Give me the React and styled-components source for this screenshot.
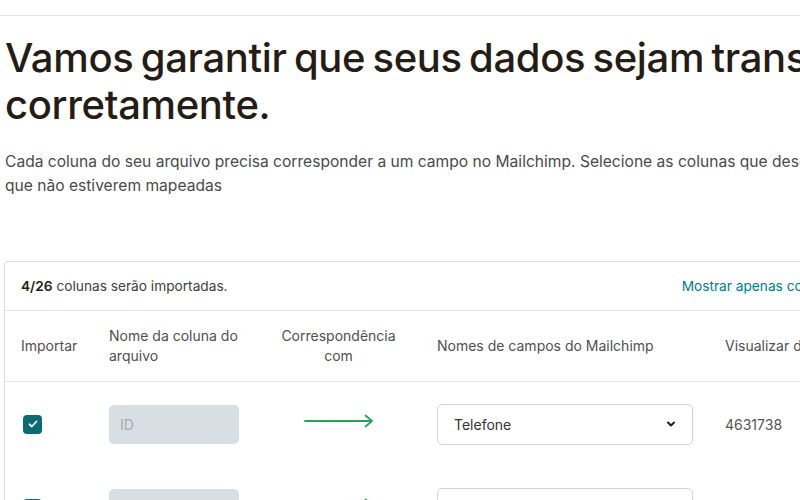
import React from 'react';
import styled, { createGlobalStyle } from 'styled-components';

const GlobalStyle = createGlobalStyle`
    html, body {
        margin: 0;
        padding: 0;
        background: #fff;
        overflow: hidden;
    }
    body {
        font-family: "Inter", "Liberation Sans", sans-serif;
        color: #241c15;
    }
`;

const TopBar = styled.div`
    height: 15px;
    border-bottom: 1px solid #e6e6e6;
`;

const Page = styled.main`
    width: 1200px;
    padding: 0 4px;
`;

const Heading = styled.h1`
    margin: 18px 0 0 1px;
    font-size: 40px;
    line-height: 47px;
    font-weight: 500;
    letter-spacing: -0.35px;
    word-spacing: -3px;
    color: #241c15;
    width: 1100px;
`;

const Intro = styled.p`
    margin: 22px 0 0 1px;
    font-size: 15.6px;
    line-height: 24px;
    color: #4a4a4a;
`;

const Card = styled.section`
    margin-top: 63px;
    border: 1px solid #dcdcdc;
    border-radius: 4px;
    width: 1100px;
`;

const CardHeader = styled.div`
    height: 48px;
    display: flex;
    align-items: center;
    justify-content: space-between;
    padding: 0 16px;
    border-bottom: 1px solid #e3e3e3;
    font-size: 13.7px;
    color: #3d3d3d;
    b {
        font-weight: 600;
        color: #241c15;
    }
`;

const CardLink = styled.a`
    color: #007c89;
    font-size: 13.7px;
    margin-right: 110px;
    text-decoration: none;
`;

const Row = styled.div`
    display: grid;
    grid-template-columns: 88px 163px 165px 288px 1fr;
    align-items: center;
    min-height: ${p => (p.$head ? '70px' : '84px')};
    border-bottom: ${p => (p.$head ? '1px solid #e3e3e3' : 'none')};
`;

const Cell = styled.div`
    padding: 0 16px;
    display: flex;
    align-items: center;
    justify-content: ${p => (p.$center ? 'center' : 'flex-start')};
`;

const HeadText = styled.div`
    font-size: 14px;
    line-height: 20px;
    color: #4f4f4f;
    text-align: ${p => (p.$center ? 'center' : 'left')};
`;

const Check = styled.span`
    width: 19px;
    height: 19px;
    margin-left: 2px;
    border-radius: 4px;
    background: #0b6a72;
    display: inline-flex;
    align-items: center;
    justify-content: center;
`;

const FileField = styled.div`
    width: 130px;
    height: 39px;
    box-sizing: border-box;
    padding: 0 11px;
    border-radius: 5px;
    background: #d8dfe4;
    color: #a3abb1;
    font-size: 14px;
    display: flex;
    align-items: center;
`;

const ArrowWrap = styled.span`
    display: inline-flex;
    margin: 0 0 6px 0;
`;

const Select = styled.div`
    width: 256px;
    height: 41px;
    box-sizing: border-box;
    padding: 0 16px;
    border: 1px solid #d2d2d2;
    border-radius: 5px;
    display: flex;
    align-items: center;
    justify-content: space-between;
    font-size: 14px;
    color: #333;
`;

const Preview = styled.span`
    font-size: 14px;
    color: #555;
`;

const CheckIcon = () => (
    <svg width="12" height="12" viewBox="0 0 12 12" fill="none">
        <path d="M2.5 6.3l2.3 2.2 4.7-5" stroke="#fff" strokeWidth="1.8" strokeLinecap="round" strokeLinejoin="round" />
    </svg>
);

const Arrow = () => (
    <svg width="70" height="14" viewBox="0 0 70 14" fill="none">
        <path d="M1 7h67M61.5 1.5l6.5 5.5-6.5 5.5" stroke="#23a35c" strokeWidth="1.8" strokeLinecap="round" strokeLinejoin="round" />
    </svg>
);

const Chevron = () => (
    <svg width="10" height="8" viewBox="0 0 10 8" fill="none">
        <path d="M2 2.5l3 3 3-3" stroke="#241c15" strokeWidth="2" strokeLinecap="round" strokeLinejoin="round" />
    </svg>
);

const rows = [
    { file: 'ID', field: 'Telefone', preview: '4631738' },
    { file: 'Nome', field: 'Nome', preview: 'Maria' },
];

const App = () => {
    return (
        <>
            <GlobalStyle />
            <TopBar />
            <Page>
                <Heading>Vamos garantir que seus dados sejam transferidos corretamente.</Heading>
                <Intro>
                    Cada coluna do seu arquivo precisa corresponder a um campo no Mailchimp. Selecione as colunas que deseja importar e ignore as
                    <br />
                    que não estiverem mapeadas
                </Intro>
                <Card>
                    <CardHeader>
                        <span><b>4/26</b> colunas serão importadas.</span>
                        <CardLink href="#">Mostrar apenas colunas não correspondentes</CardLink>
                    </CardHeader>
                    <Row $head>
                        <Cell><HeadText>Importar</HeadText></Cell>
                        <Cell><HeadText>Nome da coluna do<br />arquivo</HeadText></Cell>
                        <Cell $center><HeadText $center>Correspondência<br />com</HeadText></Cell>
                        <Cell><HeadText>Nomes de campos do Mailchimp</HeadText></Cell>
                        <Cell><HeadText>Visualizar dados</HeadText></Cell>
                    </Row>
                    {rows.map(item => (
                        <Row key={item.file}>
                            <Cell><Check><CheckIcon /></Check></Cell>
                            <Cell><FileField>{item.file}</FileField></Cell>
                            <Cell $center><ArrowWrap><Arrow /></ArrowWrap></Cell>
                            <Cell>
                                <Select>
                                    {item.field}
                                    <Chevron />
                                </Select>
                            </Cell>
                            <Cell><Preview>{item.preview}</Preview></Cell>
                        </Row>
                    ))}
                </Card>
            </Page>
        </>
    );
};

export default App;
